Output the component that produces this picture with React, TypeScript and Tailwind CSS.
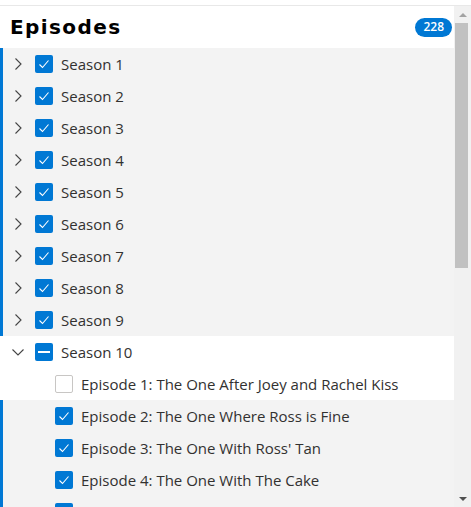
import React from 'react';

const seasons = [1, 2, 3, 4, 5, 6, 7, 8, 9];

const episodes = [
  { title: 'Episode 1: The One After Joey and Rachel Kiss', checked: false },
  { title: 'Episode 2: The One Where Ross is Fine', checked: true },
  { title: "Episode 3: The One With Ross' Tan", checked: true },
  { title: 'Episode 4: The One With The Cake', checked: true },
  { title: "Episode 5: The One Where Rachel's Sister Babysits", checked: true },
];

const Chevron = ({ open }: { open?: boolean }) =>
  open ? (
    <svg width="14" height="14" viewBox="0 0 14 14" className="shrink-0">
      <path d="M1.5 4.5 L7 10 L12.5 4.5" fill="none" stroke="#444" strokeWidth="1.1" />
    </svg>
  ) : (
    <svg width="14" height="14" viewBox="0 0 14 14" className="shrink-0">
      <path d="M4.5 1.5 L10 7 L4.5 12.5" fill="none" stroke="#444" strokeWidth="1.1" />
    </svg>
  );

const Check = ({ state }: { state: 'on' | 'off' | 'mixed' }) => {
  if (state === 'off')
    return <span className="w-[18px] h-[18px] rounded-[2px] border border-[#c8c6c4] bg-white shrink-0" />;
  return (
    <span className="w-[18px] h-[18px] rounded-[2px] bg-[#0078d4] shrink-0 flex items-center justify-center">
      {state === 'on' ? (
        <svg width="12" height="12" viewBox="0 0 12 12">
          <path d="M1.5 6.5 L4.5 9.5 L10.5 2.5" fill="none" stroke="#fff" strokeWidth="1.1" />
        </svg>
      ) : (
        <span className="w-[12px] h-[2px] bg-white" />
      )}
    </span>
  );
};

export default function App() {
  return (
    <div className="h-[507px] w-[471px] bg-white overflow-hidden pt-[5px]" style={{ fontFamily: '"Open Sans", "Noto Sans", sans-serif' }}>
      <div className="flex h-[502px] border-t border-[#e8e8e8]">
        <div className="flex-1 flex flex-col overflow-hidden">
          <div className="h-[42px] shrink-0 flex items-center justify-between pl-[10px] pr-[2px]">
            <span className="text-[20px] font-bold text-black tracking-[1.4px]" style={{ fontFamily: '"DejaVu Sans", sans-serif' }}>
              Episodes
            </span>
            <span className="h-[19px] px-[8px] rounded-full bg-[#0078d4] text-white text-[12px] font-semibold flex items-center leading-none">
              228
            </span>
          </div>
          {seasons.map((s) => (
            <div key={s} className="h-8 shrink-0 flex items-center bg-[#f3f3f3] border-l-[3px] border-[#0078d4] text-[#323130] text-[15px]">
              <span className="ml-[8px] mr-[10px] flex"><Chevron /></span>
              <Check state="on" />
              <span className="ml-[8px] pt-px">Season {s}</span>
            </div>
          ))}
          <div className="h-8 shrink-0 flex items-center bg-white pl-[3px] text-[#323130] text-[15px]">
            <span className="ml-[8px] mr-[10px] flex"><Chevron open /></span>
            <Check state="mixed" />
            <span className="ml-[8px] pt-px">Season 10</span>
          </div>
          {episodes.map((e) => (
            <div
              key={e.title}
              className={
                e.checked
                  ? 'h-8 shrink-0 flex items-center bg-[#f3f3f3] border-l-[3px] border-[#0078d4] pl-[52px] text-[#323130] text-[15px]'
                  : 'h-8 shrink-0 flex items-center bg-white pl-[55px] text-[#323130] text-[15px]'
              }
            >
              <Check state={e.checked ? 'on' : 'off'} />
              <span className="ml-[8px] pt-px whitespace-nowrap">{e.title}</span>
            </div>
          ))}
        </div>
        <div className="w-[17px] shrink-0 bg-[#f1f1f1] flex flex-col items-center">
          <div className="h-[17px] w-full flex items-center justify-center">
            <span className="w-0 h-0 border-l-[4px] border-r-[4px] border-b-[4px] border-l-transparent border-r-transparent border-b-[#a3a3a3]" />
          </div>
          <div className="w-[13px] mr-[2px] h-[245px] bg-[#c1c1c1]" />
          <div className="flex-1" />
          <div className="h-[17px] w-full flex items-center justify-center">
            <span className="w-0 h-0 border-l-[4px] border-r-[4px] border-t-[4px] border-l-transparent border-r-transparent border-t-[#505050]" />
          </div>
        </div>
      </div>
    </div>
  );
}
